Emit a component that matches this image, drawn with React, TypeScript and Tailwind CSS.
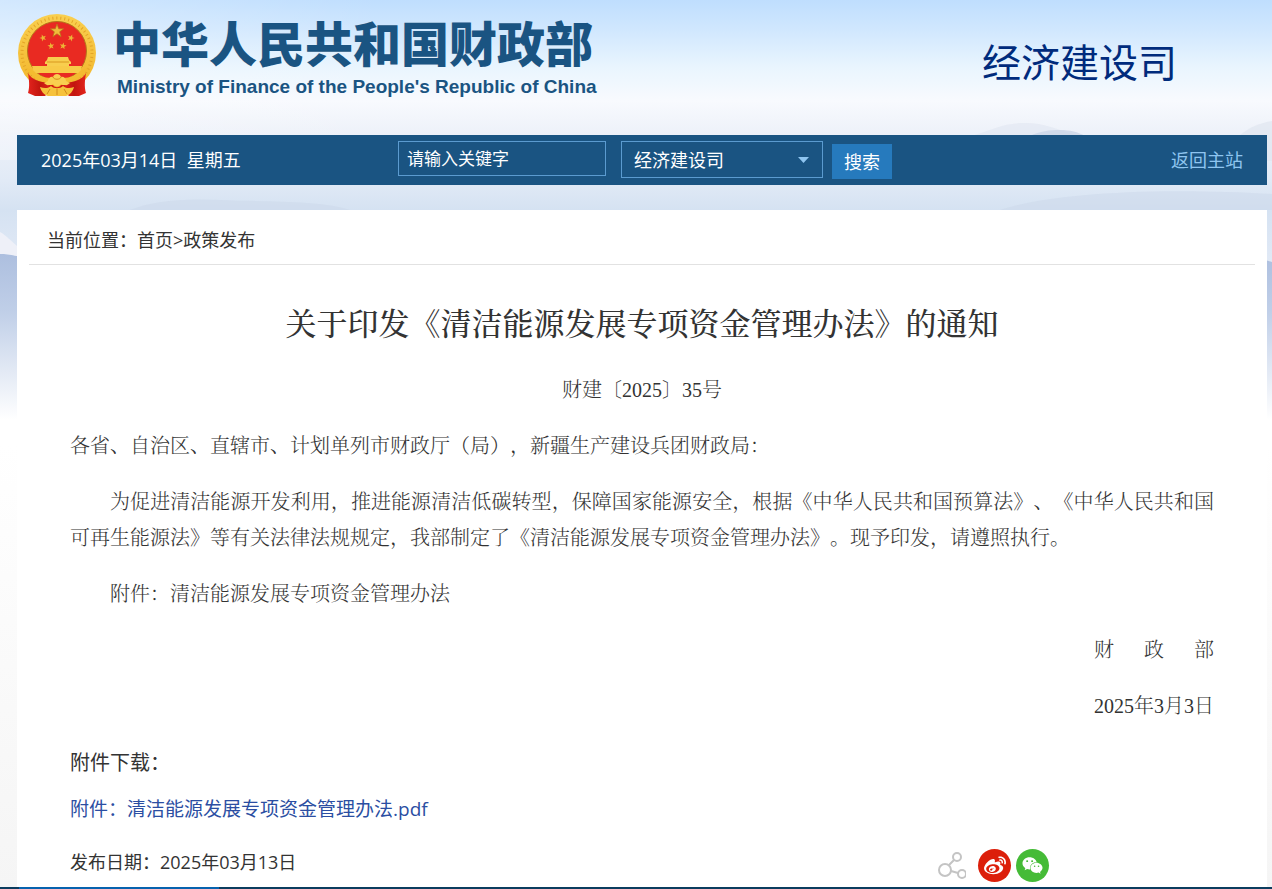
import { FaWeibo, FaWeixin } from "react-icons/fa";

const article = {
  title: "关于印发《清洁能源发展专项资金管理办法》的通知",
  number: "财建〔2025〕35号",
  receivers:
    "各省、自治区、直辖市、计划单列市财政厅（局），新疆生产建设兵团财政局：",
  content:
    "为促进清洁能源开发利用，推进能源清洁低碳转型，保障国家能源安全，根据《中华人民共和国预算法》、《中华人民共和国可再生能源法》等有关法律法规规定，我部制定了《清洁能源发展专项资金管理办法》。现予印发，请遵照执行。",
  attachment: "清洁能源发展专项资金管理办法",
};

const STAR = "0,-10 2.4,-3.2 9.5,-3.1 3.8,1.2 5.9,8.1 0,4 -5.9,8.1 -3.8,1.2 -9.5,-3.1 -2.4,-3.2";

const smallStars = [
  { x: 26, y: 26, r: -20 },
  { x: 54, y: 26, r: 20 },
  { x: 34, y: 34, r: -10 },
  { x: 46, y: 34, r: 10 },
];

function Emblem() {
  return (
    <svg width="80" height="86" viewBox="0 0 80 86" className="shrink-0" aria-hidden="true">
      <defs>
        <linearGradient id="gold" x1="0" y1="0" x2="0" y2="1">
          <stop offset="0" stopColor="#f9cf50" />
          <stop offset="1" stopColor="#f2b52a" />
        </linearGradient>
        <linearGradient id="cloth" x1="0" y1="0" x2="1" y2="0">
          <stop offset="0" stopColor="#e3241d" />
          <stop offset=".5" stopColor="#c2160f" />
          <stop offset="1" stopColor="#e3241d" />
        </linearGradient>
      </defs>
      <circle cx="40" cy="41" r="39" fill="url(#gold)" />
      <circle cx="40" cy="41" r="35" fill="none" stroke="#e3a427" strokeWidth="3" strokeDasharray="1 3" />
      <circle cx="40" cy="39" r="29.500" fill="#e92a22" stroke="#b5761a" strokeWidth="1" />
      <polygon points={STAR} transform="translate(40 19) scale(.7)" fill="#f0bd3a" stroke="#b5741a" strokeWidth="1" />
      {smallStars.map((star) => (
        <polygon
          key={star.x}
          points={STAR}
          transform={`translate(${star.x} ${star.y}) rotate(${star.r}) scale(.36)`}
          fill="#ecb436"
        />
      ))}
      {/* gate tower */}
      <path d="M31 45h20l1 3h-22zM28 50l2-2h22l2 2v2h-2v3H30v-3h-2z" fill="#f8ce4e" />
      <path d="M30 50h22" stroke="#d9981f" strokeWidth="1" />
      <path d="M15 54h50l-2 7H17z" fill="#f8ca48" />
      {/* ribbons */}
      <path d="M11 61c4 7 12 9 21 10l3 6-7 7H18l-7-3c2-7 1-13 0-20z" fill="url(#cloth)" />
      <path d="M69 61c-4 7-12 9-21 10l-3 6 7 7h10l7-3c-2-7-1-13 0-20z" fill="url(#cloth)" />
      <path d="M9 56c5 9 13 13 23 14l2-4c-7 0-14-3-17-7zM71 56c-5 9-13 13-23 14l-2-4c7 0 14-3 17-7z" fill="#f4bb30" />
      {/* gear */}
      <path d="M31 69c0-3 3-5 5-4 1-4 7-4 8 0 2-1 5 1 5 4l4 2c-3 3-6 3-9 1-2 3-6 3-8 0-3 2-6 2-9-1z" fill="#f9cf50" />
      <path d="M36 65c1 3 7 3 8 0" fill="none" stroke="#d28c1a" strokeWidth="1" />
      <path d="M31 73l5 0c2 3 6 3 8 0l5 0-3 5H34z" fill="#d21c15" />
      <path d="M23 75c5 2 9 1 11-1 3 3 9 3 12 0 2 2 6 3 11 1-1 4-4 8-8 9H31c-4-1-7-5-8-9z" fill="#f6c23c" />
      <path d="M33 77l-3 5M40 77v6M47 77l3 5" stroke="#d28c1a" strokeWidth="1" />
    </svg>
  );
}

function Mountains() {
  return (
    <svg
      className="absolute inset-x-0 top-0 -z-10 h-[420px] w-full"
      viewBox="0 0 1272 420"
      preserveAspectRatio="none"
      aria-hidden="true"
    >
      <defs>
        <linearGradient id="sky" x1="0" y1="0" x2="0" y2="1">
          <stop offset="0" stopColor="#bfdefe" />
          <stop offset=".07" stopColor="#d0e7fe" />
          <stop offset=".16" stopColor="#e9f5fe" />
          <stop offset=".24" stopColor="#f8fafe" />
          <stop offset=".32" stopColor="#edf1f9" />
          <stop offset=".43" stopColor="#e1eaf6" />
          <stop offset=".5" stopColor="#d5e2f2" />
          <stop offset=".6" stopColor="#dfe8f5" />
          <stop offset="1" stopColor="#ffffff" />
        </linearGradient>
        <linearGradient id="hill" x1="0" y1="0" x2="0" y2="1">
          <stop offset="0" stopColor="#adbfdf" />
          <stop offset=".35" stopColor="#c0cfe8" />
          <stop offset="1" stopColor="#ffffff" />
        </linearGradient>
        <linearGradient id="haze" x1="0" y1="0" x2="1" y2="0">
          <stop offset="0" stopColor="#ffffff" stopOpacity=".3" />
          <stop offset=".3" stopColor="#ffffff" stopOpacity="0" />
        </linearGradient>
      </defs>
      <rect width="1272" height="420" fill="url(#sky)" />
      <rect width="1272" height="160" fill="url(#haze)" />
      <path d="M975 135c20-6 30-12 50-12s30 6 50 12z" fill="#dde4f0" opacity=".5" />
      <path d="M1030 136c10-5 20-6 30-6s18 2 25 6z" fill="#c8d3e6" opacity=".7" />
      <path d="M1240 135c10-8 20-12 32-14v40h-40z" fill="#dfe5f0" opacity=".7" />
      <path d="M130 210c20-8 50-12 90-10s100 0 130 10zM1000 210c40-14 140-24 272-16v16z" fill="#cbd7ea" opacity=".5" />
      <path d="M0 232c6 3 12 10 17 14v20H0z" fill="#eef0f8" />
      <path d="M0 254c8 0 12 1 30 5v161H0zM1260 258c6 2 8 3 12 4v158h-12z" fill="url(#hill)" />
    </svg>
  );
}

function ShareIcon() {
  return (
    <svg width="28" height="28" viewBox="0 0 28 28" fill="none" stroke="#c4c4c4" strokeWidth="2" aria-hidden="true">
      <circle cx="7" cy="18" r="6" />
      <circle cx="19" cy="5" r="4" />
      <circle cx="24" cy="22" r="4" />
      <path d="M11 13l5-5M13 19l7 2" />
    </svg>
  );
}

export default function App() {
  return (
    <div
      lang="zh-CN"
      className="relative isolate bg-linear-to-b from-white from-50% to-[#f5f5f5] font-['Open_Sans','Noto_Sans_CJK_SC',sans-serif] text-lg text-[#333] [text-spacing-trim:space-all]"
    >
      <Mountains />

      <div className="pr-[5px] pl-[17px]">
        <header className="flex h-[135px] items-start justify-between">
          <div className="flex gap-4 pt-3">
            <Emblem />
            <div className="text-[#1a5482]">
              <h1 className="font-['Noto_Sans_CJK_SC',sans-serif] text-5xl leading-[58px] font-black">
                中华人民共和国财政部
              </h1>
              <p className="pl-1 font-['Liberation_Sans',sans-serif] text-[19px] leading-[34px] font-bold">
                Ministry of Finance of the People's Republic of China
              </p>
            </div>
          </div>
          <h2 className="pt-8 pr-[90px] text-[39px] leading-[60px] text-[#002b7c]">经济建设司</h2>
        </header>

        <nav className="flex h-[50px] items-center bg-[#1a5482] px-6 text-white">
          <span className="w-[357px] whitespace-pre">2025年03月14日  星期五</span>
          <form className="flex h-[38px] items-start" onSubmit={(e) => e.preventDefault()}>
            <input
              type="text"
              aria-label="关键字"
              placeholder="请输入关键字"
              className="h-[35px] w-52 border border-[#5b9bd0] bg-transparent px-2 text-[17px] outline-none placeholder:text-white"
            />
            <div className="relative ml-[15px]">
              <select
                aria-label="站点"
                className="h-[37px] w-[202px] appearance-none border border-[#5b9bd0] bg-[#1a5482] px-3 text-lg leading-8 outline-none"
              >
                <option>经济建设司</option>
              </select>
              <svg className="pointer-events-none absolute top-4 right-[14px]" width="11" height="6" viewBox="0 0 11 6">
                <path d="M0 0h11L5.500 6z" fill="#8ec5f0" />
              </svg>
            </div>
            <button type="submit" className="ml-[9px] h-[35px] w-[60px] self-end bg-[#267abd]">
              搜索
            </button>
          </form>
          <a href="#" className="ml-auto text-[#8ec5f0]">
            返回主站
          </a>
        </nav>

        <main className="mt-[25px] bg-white px-3 pb-[5px]">
          <div className="border-b border-[#e2e2e2] px-[18px] pt-4 pb-[10px] leading-7">
            当前位置：<a href="#">首页</a>&gt;<a href="#">政策发布</a>
          </div>

          <div className="px-[41px]">
            <article className="font-['Liberation_Serif','Noto_Serif_CJK_SC','Noto_Sans_CJK_SC',serif] text-xl leading-9">
              <h2 className="mt-9 text-center text-[31px] leading-[48px] font-medium">{article.title}</h2>
              <p className="mt-[23px] text-center font-light">{article.number}</p>
              <p className="mt-5 font-light">{article.receivers}</p>
              <p className="mt-5 text-justify indent-10 font-light">{article.content}</p>
              <p className="mt-5 indent-10 font-light">附件：{article.attachment}</p>
              <p className="mt-5 text-right font-light whitespace-pre">财      政      部</p>
              <p className="mt-5 text-right font-light">2025年3月3日</p>
            </article>

            <h3 className="mt-[23px] text-xl leading-8">附件下载：</h3>
            <a href="#" className="mt-[14px] block text-[19px] leading-8 text-[#2b4ea2]">
              附件：{article.attachment}.pdf
            </a>

            <div className="mt-[19px] flex items-start justify-between pr-[165px]">
              <span className="leading-9">发布日期：2025年03月13日</span>
              <div className="flex items-center gap-[5px] pt-[5px]">
                <button aria-label="分享" className="mr-[7px]">
                  <ShareIcon />
                </button>
                <button
                  aria-label="微博"
                  className="flex size-[33px] items-center justify-center rounded-full bg-[#dc1f0a] text-white"
                >
                  <FaWeibo size={22} />
                </button>
                <button
                  aria-label="微信"
                  className="flex size-[33px] items-center justify-center rounded-full bg-[#45bb37] text-white"
                >
                  <FaWeixin size={21} />
                </button>
              </div>
            </div>
          </div>
        </main>
      </div>

      <footer className="flex h-[2px] bg-[#0b3c5e] pl-[19px]">
        <div className="w-[200px] bg-[#0662ae]" />
      </footer>
    </div>
  );
}
